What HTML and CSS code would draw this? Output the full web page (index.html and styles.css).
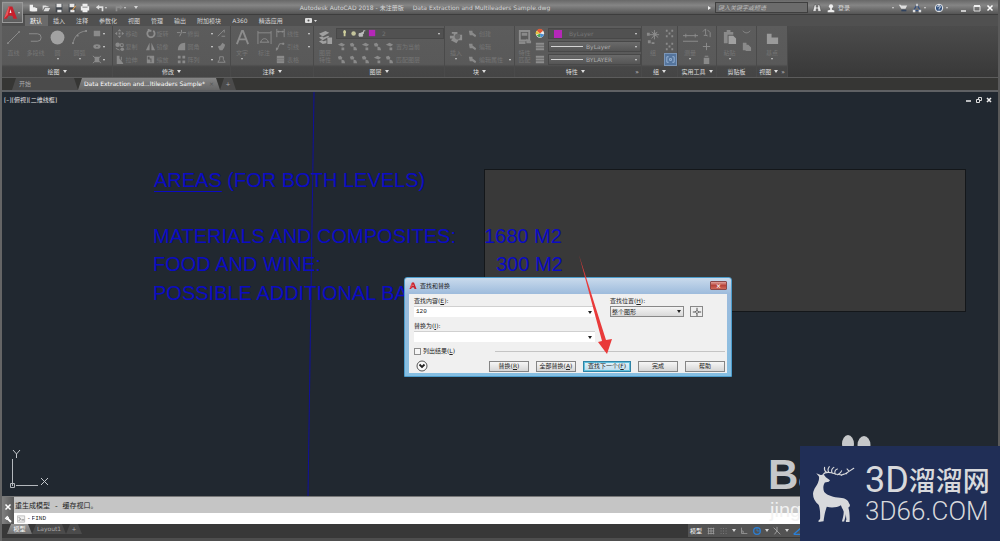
FILE: index.html
```html
<!DOCTYPE html>
<html lang="zh-CN">
<head>
<meta charset="utf-8">
<title>Autodesk AutoCAD 2018</title>
<link rel="stylesheet" href="styles.css">
</head>
<body>
<svg class="defs" aria-hidden="true">
  <symbol id="line" viewBox="0 0 16 16"><path d="M2 14 14 2" class="s"/><circle cx="2" cy="14" r="1"/><circle cx="14" cy="2" r="1"/></symbol>
  <symbol id="pline" viewBox="0 0 16 16"><path d="M1 4h9a4 4 0 0 1 0 8H3" class="s"/></symbol>
  <symbol id="circle" viewBox="0 0 16 16"><circle cx="8" cy="8" r="7.400" fill="#a2a2a2"/></symbol>
  <symbol id="arc" viewBox="0 0 16 16"><path d="M1 15C2 7 7 2 15 1" class="s"/><path d="M0 13h2v2H0zM5 5h2v2H5zM14 0h2v2h-2z"/></symbol>
  <symbol id="rect" viewBox="0 0 12 12"><path d="M3 3h7v6H3z"/></symbol>
  <symbol id="ellipse" viewBox="0 0 12 12"><ellipse cx="6.500" cy="6" rx="4" ry="2.500"/><circle cx="6.500" cy="6" r=".8" fill="#555"/></symbol>
  <symbol id="hatch" viewBox="0 0 12 12"><path d="M2 2l9 8M2 10l9-8" class="s"/><path d="M4 3h5v6H4z"/></symbol>
  <symbol id="move" viewBox="0 0 12 12"><path d="M6 1l2 2.500H4zM6 11l2-2.500H4zM1 6l2.500-2v4zM11 6L8.500 4v4zM5 5h2v2H5z"/></symbol>
  <symbol id="copy" viewBox="0 0 12 12"><circle cx="4" cy="4" r="2.500"/><circle cx="9" cy="9" r="2"/><path d="M7 3h3v3H7zM2 8l4 2" class="s"/></symbol>
  <symbol id="stretch" viewBox="0 0 12 12"><path d="M3 2h3v3l4 5v1H3z"/><path d="M8 3v4" class="s"/></symbol>
  <symbol id="rotate" viewBox="0 0 12 12"><path d="M4 3a4 4 0 1 0 5 0M4 1v2h3" class="s w"/></symbol>
  <symbol id="mirror" viewBox="0 0 12 12"><path d="M5 2v8H1zM7 2v8h4z"/></symbol>
  <symbol id="scale" viewBox="0 0 12 12"><path d="M2 2h8v8H2zm1 1v3h3v3h1V5H5V3z" fill-rule="evenodd"/></symbol>
  <symbol id="trim" viewBox="0 0 12 12"><path d="M1 5h4M7 5h4M6 2v3l-2 4" class="s"/></symbol>
  <symbol id="fillet" viewBox="0 0 12 12"><path d="M2 10c0-5 3-8 8-8v8z"/></symbol>
  <symbol id="array" viewBox="0 0 12 12"><path d="M2 2h3v3H2zM7 2h3v3H7zM2 7h3v3H2zM7 7h3v3H7z"/></symbol>
  <symbol id="erase" viewBox="0 0 12 12"><path d="M2 9 9 2M6 9h4M9 2v3" class="s"/></symbol>
  <symbol id="explode" viewBox="0 0 12 12"><path d="M2 6l3-1 2-3 3 2-1 3-2 3-3 0z"/></symbol>
  <symbol id="offset" viewBox="0 0 12 12"><path d="M4 3h4v3l2 3H2l2-3z" class="s"/></symbol>
  <symbol id="text" viewBox="0 0 16 16"><path d="M2 15 7.500 1h1L14 15M4 10h8" class="s w"/></symbol>
  <symbol id="dim" viewBox="0 0 16 16"><path d="M1 15V1M15 15V1M1 3h14M4 13c1-5 7-5 8 0M3 13h10" class="s"/></symbol>
  <symbol id="linear" viewBox="0 0 12 12"><path d="M2 1v9M10 1v9M2 4h8M4 3v2M8 3v2" class="s"/></symbol>
  <symbol id="leader" viewBox="0 0 12 12"><path d="M2 10l3-7h5" class="s"/><path d="M1 7l3 1-3 3zM8 2h2v2H8z"/></symbol>
  <symbol id="table" viewBox="0 0 12 12"><path d="M2 2h8v8H2z"/><path d="M2 5h8M2 7.500h8" stroke="#777"/></symbol>
  <symbol id="layers" viewBox="0 0 16 16"><path d="M1 4l7-3 4 2-7 4zM1 8l3-1 2 1 5-2 1 1-7 4zM1 12l3-1 2 1 3-1v3l-4 1zM10 8h5v7h-5z" fill="#a0a0a0"/></symbol>
  <symbol id="lay" viewBox="0 0 12 12"><path d="M2 4l4-2 4 2-3 2zM6 7h3v3H6z"/></symbol>
  <symbol id="lay2" viewBox="0 0 12 12"><path d="M2 3l3-1 2 2-1 2H3zM6 6l3 1 1 3H6z"/></symbol>
  <symbol id="insert" viewBox="0 0 16 16"><path d="M3 2h6v3l5 0v6h-4l-2 3-6-3 2-2H1V6h4V4H3z" fill="#8f8f8f"/><circle cx="9" cy="7" r="3" fill="#6a6a6a"/></symbol>
  <symbol id="blk" viewBox="0 0 12 12"><path d="M2 3h4v2l4 3-1 2-3-2H3z"/></symbol>
  <symbol id="match" viewBox="0 0 16 16"><path d="M3 1h10v10H3z" class="s w"/><path d="M5 3h6v3H5zM2 12h7v3H2zM10 9l3 3 2-1v3h-5z"/></symbol>
  <symbol id="lines" viewBox="0 0 12 12"><path d="M2 3h9M2 6h9M2 9h9" class="s w"/></symbol>
  <symbol id="wheel" viewBox="0 0 12 12"><circle cx="6.500" cy="6" r="4.500" fill="#eee"/><path d="M6.500 6 3 3a4 4 0 0 1 7 0z" fill="#e35b35"/><path d="M6.500 6 3 3a4 4 0 0 0-1 4z" fill="#e6c23c"/><path d="M6.500 6 11 7a4 4 0 0 1-4 3z" fill="#4a8dd0"/><path d="M6.500 6 7 10a4 4 0 0 1-4-2z" fill="#4ca356"/></symbol>
  <symbol id="group" viewBox="0 0 16 16"><path d="M9 0v10M4 5h10M6 2l7 6M12 2 6 9" class="s"/><path d="M8 3h3v3H8zM1 3h3v3H1zM2 11h3v3H2zM6 13h3v2H6z"/></symbol>
  <symbol id="dots" viewBox="0 0 12 12"><path d="M2 2h2v2H2zM8 2h2v2H8zM2 8h2v2H2zM8 8h2v2H8zM5 5h2v2H5z"/></symbol>
  <symbol id="brackets" viewBox="0 0 12 12"><path d="M4 3H2v6h2M8 3h2v6H8M5 5h2v2H5z" fill="none" stroke="#9db8d8"/></symbol>
  <symbol id="measure" viewBox="0 0 16 16"><path d="M0 6h16M0 12h16M3 4v4M13 4v4" class="s"/></symbol>
  <symbol id="calc" viewBox="0 0 12 12"><path d="M3 4h6v7H3zM4 2h4v1H4z"/></symbol>
  <symbol id="plus" viewBox="0 0 12 12"><path d="M6 2v8M2 6h8" class="s"/></symbol>
  <symbol id="select" viewBox="0 0 12 12"><path d="M2 4l3-3v6l2 2M7 2l3 3v5M3 8h4" class="s"/></symbol>
  <symbol id="paste" viewBox="0 0 16 16"><path d="M2 2h3V0h4v2h3v3H6v9H2z"/><path d="M7 6h5l3 3v6H7z" fill="#a0a0a0"/></symbol>
  <symbol id="cut" viewBox="0 0 12 12"><path d="M2 3c2 3 6 3 8 0" class="s"/></symbol>
  <symbol id="pages" viewBox="0 0 12 12"><path d="M2 2h4v8H2zM6 4h2l3 3v4H5z"/></symbol>
  <symbol id="folder" viewBox="0 0 16 16"><path d="M2 4h5v4h7v7H2z" fill="#9a9a9a"/></symbol>
  <symbol id="new" viewBox="0 0 12 12"><path d="M2 2h4v3h3v5H2z" fill="#eee"/><path d="M4 6h7v4H4z" fill="#eee"/></symbol>
  <symbol id="open" viewBox="0 0 12 12"><path d="M2 3h4l1 1h2v1H4L2 9zM5 6h6L9 10H3z" fill="#ddd"/></symbol>
  <symbol id="save" viewBox="0 0 12 12"><path d="M2 1h8v10H2z" fill="#41464d"/><path d="M3 1h6v4H3zM4 8h5v3H4z" fill="#e8e8e8"/></symbol>
  <symbol id="saveas" viewBox="0 0 12 12"><path d="M2 1h8v10H2z" fill="#41464d"/><path d="M3 1h6v4H3zM4 8h5v3H4z" fill="#e8e8e8"/><path d="M6 8l4-5 1 1-4 5z" fill="#d79b54"/></symbol>
  <symbol id="print" viewBox="0 0 12 12"><path d="M3 1h6v3h2v5H9v2H3V9H1V4h2z" fill="#eee"/><path d="M3 5h6" stroke="#777"/></symbol>
  <symbol id="undo" viewBox="0 0 12 12"><path d="M1 5l4-3v2h5v6H8V6H5v2z" fill="#ddd"/></symbol>
  <symbol id="redo" viewBox="0 0 12 12"><path d="M11 5L7 2v2H2v6h2V6h3v2z" fill="#8d8d8d"/></symbol>
  <symbol id="bino" viewBox="0 0 12 12"><path d="M3 2h2v3h2V2h2l2 8H7V7H5v3H1z" fill="#e6e6e6" stroke="#444" stroke-width=".6"/></symbol>
  <symbol id="user" viewBox="0 0 12 12"><circle cx="6" cy="4" r="2.500" fill="#eee"/><path d="M2 11V9l3-1V6h2v2l3 1v2z" fill="#eee"/></symbol>
  <symbol id="cart" viewBox="0 0 12 12"><path d="M1 2h2l1 1h7L9 7H4z" fill="#ddd"/><path d="M4 9h6" stroke="#30425e" stroke-width="2"/></symbol>
  <symbol id="a360" viewBox="0 0 12 12"><path d="M6 2 2 9h8z" fill="none" stroke="#35507d" stroke-width="1.500"/><path d="M5 1h2v3H5zM1 8h3v3H1zM8 8h3v3H8z" fill="#ddd"/></symbol>
  <symbol id="help" viewBox="0 0 12 12"><circle cx="6" cy="6" r="4.500" fill="#33527f" stroke="#eee" stroke-width="1.200"/><path d="M4.500 5c0-2.500 3-2 3-.5S6 6 6 7.200M6 8v1" fill="none" stroke="#fff" stroke-width="1.200"/></symbol>
  <symbol id="logo" viewBox="0 0 16 16"><path d="M1 14 6 1h4l5 13h-4l-1-3H6l-2 3z" fill="#c8202c"/><path d="M7 8h2L8 4z" fill="#f3e9e9"/><path d="M1 14 6 1h1L5 10z" fill="#e9575b"/></symbol>
</svg>

<div class="app">
  <header class="titlebar">
    <button class="appmenu" aria-label="应用程序菜单"><svg><use href="#logo"/></svg><i class="caret"></i></button>
    <nav class="quick" aria-label="快速访问">
      <button aria-label="新建"><svg><use href="#new"/></svg></button>
      <button aria-label="打开"><svg><use href="#open"/></svg></button>
      <button aria-label="保存"><svg><use href="#save"/></svg></button>
      <button aria-label="另存为"><svg><use href="#saveas"/></svg></button>
      <button aria-label="打印"><svg><use href="#print"/></svg></button>
      <button class="wide" aria-label="放弃"><svg><use href="#undo"/></svg><i class="caret"></i></button>
      <button class="wide" aria-label="重做"><svg><use href="#redo"/></svg><i class="caret"></i></button>
      <button aria-label="自定义"><i class="caret wedge"></i></button>
    </nav>
    <h1 class="wintitle"><span>Autodesk AutoCAD 2018 - 未注册版</span><span>Data Extraction and Multileaders Sample.dwg</span></h1>
    <div class="info">
      <i class="caret side"></i>
      <input class="search" type="text" aria-label="搜索" placeholder="键入关键字或短语">
      <button aria-label="查找"><svg><use href="#bino"/></svg></button>
      <button class="login"><svg><use href="#user"/></svg>登录</button>
      <i class="caret"></i>
      <button aria-label="应用商店"><svg><use href="#cart"/></svg></button>
      <button aria-label="A360"><svg><use href="#a360"/></svg><i class="caret"></i></button>
      <button class="helpbtn" aria-label="帮助"><svg><use href="#help"/></svg><i class="caret"></i></button>
    </div>
    <div class="winbtns">
      <button aria-label="最小化"><svg viewBox="0 0 8 8"><path d="M1 7h5" stroke="#eee" stroke-width="1.500"/></svg></button>
      <button aria-label="还原"><svg viewBox="0 0 8 8"><path d="M1 2h6v5H1z" fill="none" stroke="#ddd"/><path d="M1 2h6" stroke="#eee" stroke-width="2"/></svg></button>
      <button aria-label="关闭"><svg viewBox="0 0 8 8"><path d="M1.500 1.500l5 5M6.500 1.500l-5 5" stroke="#fff" stroke-width="1.500"/></svg></button>
    </div>
  </header>

  <nav class="tabs" aria-label="功能区">
    <button class="on">默认</button><button>插入</button><button>注释</button><button>参数化</button><button>视图</button><button>管理</button><button>输出</button><button>附加模块</button><button>A360</button><button>精选应用</button><button class="cam" aria-label="最小化功能区"><svg viewBox="0 0 12 8"><rect x="0" y="1" width="7" height="5" rx="1" fill="#ddd"/><circle cx="3.500" cy="3.500" r="1" fill="#555"/><path d="M9 3h3l-1.500 2z" fill="#ddd"/></svg></button>
  </nav>

  <div class="ribbon">
    <section class="panel draw">
      <div class="tools">
        <button class="big"><svg><use href="#line"/></svg>直线</button>
        <button class="big"><svg><use href="#pline"/></svg>多段线</button>
        <button class="big"><svg><use href="#circle"/></svg>圆<i class="caret"></i></button>
        <button class="big"><svg><use href="#arc"/></svg>圆弧<i class="caret"></i></button>
        <div class="col c22">
          <button aria-label="矩形"><svg><use href="#rect"/></svg><i class="caret"></i></button>
          <button aria-label="椭圆"><svg><use href="#ellipse"/></svg><i class="caret"></i></button>
          <button aria-label="图案填充"><svg><use href="#hatch"/></svg><i class="caret"></i></button>
        </div>
      </div>
      <h2>绘图<i class="caret wedge"></i></h2>
    </section>
    <section class="panel modify">
      <div class="tools">
        <div class="col c31"><button><svg><use href="#move"/></svg>移动</button><button><svg><use href="#copy"/></svg>复制</button><button><svg><use href="#stretch"/></svg>拉伸</button></div>
        <div class="col c31"><button><svg><use href="#rotate"/></svg>旋转</button><button><svg><use href="#mirror"/></svg>镜像</button><button><svg><use href="#scale"/></svg>缩放</button></div>
        <div class="col c40"><button><svg><use href="#trim"/></svg>修剪<i class="caret end"></i></button><button><svg><use href="#fillet"/></svg>圆角<i class="caret end"></i></button><button><svg><use href="#array"/></svg>阵列<i class="caret end"></i></button></div>
        <div class="col c14"><button aria-label="删除"><svg><use href="#erase"/></svg></button><button aria-label="分解"><svg><use href="#explode"/></svg></button><button aria-label="偏移"><svg><use href="#offset"/></svg></button></div>
      </div>
      <h2>修改<i class="caret wedge"></i></h2>
    </section>
    <section class="panel annotate">
      <div class="tools">
        <button class="big bright"><svg><use href="#text"/></svg>文字<i class="caret"></i></button>
        <button class="big"><svg><use href="#dim"/></svg>标注</button>
        <div class="col c36"><button><svg><use href="#linear"/></svg>线性<i class="caret end"></i></button><button><svg><use href="#leader"/></svg>引线<i class="caret end"></i></button><button><svg><use href="#table"/></svg>表格</button></div>
      </div>
      <h2>注释<i class="caret wedge"></i></h2>
    </section>
    <section class="panel layer">
      <div class="tools">
        <button class="big"><svg><use href="#layers"/></svg>图层<br>特性</button>
        <div class="col c108">
          <button class="combo-dark"><svg viewBox="0 0 44 10" class="laystate"><path d="M6 1a2.500 2.500 0 0 0-1 4v3h2V5a2.500 2.500 0 0 0-1-4z" fill="#cfcf9d"/><circle cx="16" cy="5" r="2.500" fill="#c4c49c"/><path d="M22 5h5V2h2M22 5h4v3h-4z" fill="#bbb" stroke="#bbb"/><path d="M33 1h7v7h-7z" fill="#b527b8"/></svg>2<i class="caret end"></i></button>
          <div class="row"><button aria-label="关"><svg><use href="#lay"/></svg></button><button aria-label="隔离"><svg><use href="#lay2"/></svg></button><button aria-label="冻结"><svg><use href="#lay"/></svg></button><button aria-label="锁定"><svg><use href="#lay2"/></svg></button><button><svg><use href="#lay"/></svg>置为当前</button></div>
          <div class="row"><button aria-label="打开所有"><svg><use href="#lay2"/></svg></button><button aria-label="取消隔离"><svg><use href="#lay2"/></svg></button><button aria-label="解冻"><svg><use href="#lay2"/></svg></button><button aria-label="解锁"><svg><use href="#lay"/></svg></button><button><svg><use href="#lay2"/></svg>匹配图层</button></div>
        </div>
      </div>
      <h2>图层<i class="caret wedge"></i></h2>
    </section>
    <section class="panel block">
      <div class="tools">
        <button class="big"><svg><use href="#insert"/></svg>插入<i class="caret"></i></button>
        <div class="col c46"><button><svg><use href="#blk"/></svg>创建</button><button><svg><use href="#blk"/></svg>编辑</button><button><svg><use href="#blk"/></svg>编辑属性<i class="caret end"></i></button></div>
      </div>
      <h2>块<i class="caret wedge"></i></h2>
    </section>
    <section class="panel props">
      <div class="tools">
        <button class="big slim"><svg><use href="#match"/></svg>特性<br>匹配</button>
        <div class="col c14"><button aria-label="颜色"><svg><use href="#wheel"/></svg></button><button aria-label="线宽"><svg><use href="#lines"/></svg></button><button aria-label="线型"><svg><use href="#lines"/></svg></button></div>
        <div class="col c94">
          <button class="combo-dark"><i class="swatch"></i>ByLayer<i class="caret end"></i></button>
          <button class="combo-dark lit"><i class="rule"></i>ByLayer<i class="caret end"></i></button>
          <button class="combo-dark lit"><i class="rule"></i>BYLAYER<i class="caret end"></i></button>
        </div>
      </div>
      <h2 class="ends"><span></span><span>特性<i class="caret wedge"></i></span><i class="launch">»</i></h2>
    </section>
    <section class="panel groups">
      <div class="tools">
        <button class="big"><svg><use href="#group"/></svg>组</button>
        <div class="col c14"><button aria-label="解除编组"><svg><use href="#dots"/></svg></button><button aria-label="组编辑"><svg><use href="#dots"/></svg></button><button class="active" aria-label="组选择"><svg><use href="#brackets"/></svg></button></div>
      </div>
      <h2>组<i class="caret wedge"></i></h2>
    </section>
    <section class="panel utils">
      <div class="tools">
        <button class="big"><svg><use href="#measure"/></svg>测量<i class="caret"></i></button>
        <div class="col c14"><button aria-label="快速选择"><svg><use href="#select"/></svg></button><button aria-label="点坐标"><svg><use href="#plus"/></svg></button><button aria-label="计算器"><svg><use href="#calc"/></svg></button></div>
      </div>
      <h2>实用工具<i class="caret wedge"></i></h2>
    </section>
    <section class="panel clip">
      <div class="tools">
        <button class="big"><svg><use href="#paste"/></svg>粘贴<i class="caret"></i></button>
        <div class="col c14"><button aria-label="剪切"><svg><use href="#cut"/></svg></button><button aria-label="复制剪裁"><svg><use href="#pages"/></svg></button></div>
      </div>
      <h2>剪贴板</h2>
    </section>
    <section class="panel view">
      <div class="tools"><button class="big"><svg><use href="#folder"/></svg>基点<i class="caret"></i></button></div>
      <h2>视图<i class="caret wedge"></i><i class="launch">»</i></h2>
    </section>
  </div>

  <nav class="docs" aria-label="图形文件">
    <button class="doc start">开始</button>
    <button class="doc current">Data Extraction and...ltileaders Sample*<span class="x">×</span></button>
    <button class="doc add" aria-label="新图形">+</button>
  </nav>

  <main class="canvas">
    <div class="viewlabel">[–][俯视][二维线框]</div>
    <div class="viewbtns">
      <button aria-label="最小化"><svg viewBox="0 0 8 8"><path d="M1 5h5" stroke="#eee" stroke-width="1.500"/></svg></button>
      <button aria-label="还原"><svg viewBox="0 0 8 8"><path d="M1.500 3.500h3v3h-3zM3.500 3V1.500h3v3H5" fill="none" stroke="#ddd"/></svg></button>
      <button aria-label="关闭"><svg viewBox="0 0 8 8"><path d="M2 2l4 4M6 2l-4 4" stroke="#eee" stroke-width="1.500"/></svg></button>
    </div>
    <div class="solid"></div>
    <svg class="axis" viewBox="0 0 8 404" preserveAspectRatio="none"><path d="M7 0 1 404" stroke="#10109a"/></svg>
    <p class="mtext t1"><u>AREAS</u> (FOR BOTH LEVELS)</p>
    <p class="mtext t2">MATERIALS AND COMPOSITES:</p>
    <p class="mtext t3">FOOD AND WINE:</p>
    <p class="mtext t4">POSSIBLE ADDITIONAL BA</p>
    <p class="mtext v2">1680 M2</p>
    <p class="mtext v3">300 M2</p>
    <svg class="ucs" viewBox="0 0 44 44" aria-label="UCS"><path d="M4.500 12v27M8 38.500h22M2.500 36.500h4v4h-4z" fill="none" stroke="#b4b8bd"/><path d="M5 3l3.500 4L12 3M8.500 7v4M33 31l7 7M40 31l-7 7" fill="none" stroke="#c4c8cc"/></svg>

    <form class="dialog" aria-label="查找和替换">
      <header class="dtitle"><svg><use href="#logo"/></svg><span>查找和替换</span><button type="button" class="dclose" aria-label="关闭">×</button></header>
      <div class="dbody">
        <div class="fields">
          <div class="field find">
            <label for="find">查找内容(<u>E</u>):</label>
            <div class="combo"><input id="find" type="text" value="120"><button type="button" aria-label="历史"><i class="caret wedge"></i></button></div>
          </div>
          <div class="field">
            <label for="where">查找位置(<u>H</u>):</label>
            <div class="where"><div class="selwrap"><select id="where"><option>整个图形</option></select><i class="caret wedge"></i></div><button type="button" class="pick" aria-label="选择对象"><svg viewBox="0 0 12 12"><path d="M6 1v3M6 8v3M1 6h3M8 6h3" stroke="#333"/><path d="M6 4l2 2-2 2-2-2z" fill="none" stroke="#333"/></svg></button></div>
          </div>
        </div>
        <div class="fields">
          <div class="field find">
            <label for="repl">替换为(<u>I</u>):</label>
            <div class="combo"><input id="repl" type="text"><button type="button" aria-label="历史"><i class="caret wedge"></i></button></div>
          </div>
        </div>
        <div class="listrow"><label><input type="checkbox">列出结果(<u>L</u>)</label><hr></div>
        <div class="actions">
          <button type="button" class="more" aria-label="展开"><svg viewBox="0 0 12 12"><circle cx="6" cy="6" r="5" fill="#fafafa" stroke="#555"/><path d="M3.500 4.500 6 7l2.500-2.500" fill="none" stroke="#222" stroke-width="1.800"/></svg></button>
          <button type="button" class="cmd">替换(<u>R</u>)</button>
          <button type="button" class="cmd">全部替换(<u>A</u>)</button>
          <button type="button" class="cmd focus">查找下一个(<u>F</u>)</button>
          <button type="button" class="cmd">完成</button>
          <button type="button" class="cmd">帮助</button>
        </div>
      </div>
    </form>
    <svg class="arrow" viewBox="0 0 40 104" aria-hidden="true"><path d="M4 3 31 88l6-1-5 15-9-12 4-1z" fill="#e93a3a"/></svg>
  </main>

  <div class="command">
    <div class="grip"><button aria-label="关闭命令行"><svg viewBox="0 0 8 8"><path d="M1.500 1.500l5 5M6.500 1.500l-5 5" stroke="#fff" stroke-width="1.500"/></svg></button><button aria-label="自定义命令行"><svg viewBox="0 0 8 8"><path d="M2 2l5 5" stroke="#fff" stroke-width="2"/><path d="M1 3a2 2 0 0 0 3 1M3 1a2 2 0 0 1 1 3" fill="none" stroke="#fff"/></svg></button></div>
    <div class="lines">
      <output class="history">重生成模型 - 缓存视口。</output>
      <label class="prompt"><svg viewBox="0 0 10 8"><path d="M.5.500h8v7h-8z" fill="#eee" stroke="#bbb"/><path d="M2 2l2 2-2 2M5 5h3" fill="none" stroke="#777"/></svg>-<input type="text" value="FIND" aria-label="命令"></label>
    </div>
  </div>

  <footer class="status">
    <nav class="layouts" aria-label="布局"><button class="doc current">模型</button><button class="doc">Layout1</button><button class="doc add" aria-label="新建布局">+</button></nav>
    <div class="toggles">
      <button class="model">模型</button>
      <button aria-label="栅格"><svg viewBox="0 0 12 12"><path d="M2 3h8M2 6h8M2 9h8M3 2v8M6 2v8M9 2v8" stroke="#999"/></svg></button>
      <button aria-label="捕捉"><svg viewBox="0 0 12 12"><path d="M2 3h8M2 6h8M2 9h8" stroke="#888" stroke-dasharray="1 2"/></svg></button>
      <i class="caret wedge"></i>
      <button aria-label="正交"><svg viewBox="0 0 12 12"><path d="M3 2v7h7M3 6h2v3" fill="none" stroke="#999"/></svg></button>
      <button aria-label="极轴"><svg viewBox="0 0 12 12"><circle cx="6" cy="6" r="4" fill="none" stroke="#2a7fd6" stroke-width="1.500"/><path d="M6 6V2M6 6h4" stroke="#2a7fd6"/></svg></button>
      <i class="caret wedge"></i>
      <button aria-label="等轴测"><svg viewBox="0 0 12 12"><path d="M2 2l8 8M6 1v5L3 10" fill="none" stroke="#aaa"/></svg></button>
      <i class="caret wedge"></i>
      <button aria-label="对象捕捉"><svg viewBox="0 0 12 12"><path d="M2 10h10M2 10l8-7" fill="none" stroke="#2a7fd6" stroke-width="1.500"/></svg></button>
    </div>
  </footer>

  <div class="baidu" aria-hidden="true">
    <svg viewBox="0 0 34 20"><ellipse cx="8" cy="10" rx="6" ry="9"/><ellipse cx="24" cy="11" rx="6.500" ry="9"/></svg>
    <span class="bd">Bai</span><span class="jy">jing</span>
  </div>
  <aside class="brand">
    <svg class="deer" viewBox="0 0 134 176" aria-hidden="true">
      <path d="M10 23 24 29 34 28 40 36 53 45 49 50 37 52C31 60 31 73 35 82 45 94 65 98 84 100 100 101 110 107 112 117 118 122 114 128 110 130 114 143 115 158 114 175L103 175 102 171 104 168 102 148C95 140 90 133 87 123 76 130 58 132 43 128 39 139 36 150 33 173L17 175 18 169 22 167C23 149 22 134 18 122 6 112 0 101 0 87 2 70 13 61 16 51 19 43 20 37 18 33z" fill="#d8d9dc"/>
      <path d="M90 126c8 12 7 24 0 48h7c4-14 8-26 5-36z" fill="#d8d9dc"/>
      <path d="M31 28C37 18 47 20 58 22 78 30 98 30 110 19L127 8M42 20C35 16 35 10 36 5M50 21C45 15 47 8 51 3M60 23C56 15 60 8 65 5M69 26C66 18 70 12 76 10M76 28C82 24 86 24 89 16M88 30C93 25 96 24 105 25M112 17l-6-7" fill="none" stroke="#d8d9dc" stroke-width="3.500" stroke-linecap="round"/>
    </svg>
    <div class="brandtext"><strong><span>3D</span>溜溜网</strong><em>3D66.COM</em></div>
  </aside>
</div>
</body>
</html>
```

FILE: styles.css
```css
* { box-sizing: border-box; }
body {
  margin: 0;
  background: #3a3a3a;
  font: 6px/8px "DejaVu Sans", "Noto Sans CJK SC", sans-serif;
  color: #d4d4d4;
}
button, input, select {
  font: inherit;
  color: inherit;
  background: none;
  border: 0;
  padding: 0;
  margin: 0;
  border-radius: 0;
}
button { display: flex; align-items: center; white-space: nowrap; }
h1, h2, p { margin: 0; font-weight: 400; font-size: inherit; }
svg { display: block; flex: none; }
.defs { position: absolute; width: 0; height: 0; }
.s { fill: none; stroke: #8d8d8d; stroke-width: 1; }
.w { stroke-width: 2; }

.caret {
  flex: none;
  width: 0;
  height: 0;
  border: 1px solid transparent;
  border-top: 2px solid currentColor;
  border-bottom: 0;
}
.caret.wedge { border-width: 3px 2px 0; }
.caret.side { border: 2px solid transparent; border-left: 3px solid #eee; border-right: 0; }
.caret.end { margin-left: auto; margin-right: 3px; color: #ddd; }

.app {
  position: relative;
  display: flex;
  flex-direction: column;
  min-height: 100vh;
  border-left: 2px solid #656565;
  border-right: 2px solid #5a5a5a;
}

/* title bar */
.titlebar {
  position: relative;
  display: flex;
  align-items: center;
  height: 15px;
  padding: 0 4px 0 24px;
  background: linear-gradient(#686868, #858585 35%, #575757 90%, #303030);
}
.appmenu {
  position: absolute;
  left: 0;
  top: 2px;
  width: 21px;
  height: 21px;
  background: linear-gradient(#888, #5c5c5c);
  border: 1px solid #999;
  z-index: 2;
}
.appmenu svg { width: 15px; height: 16px; }
.quick { display: flex; align-items: center; }
.quick button { width: 13px; justify-content: center; }
.quick .wide { width: 19px; }
.quick svg, .info svg { width: 10px; height: 10px; }
.wintitle {
  flex: 1;
  display: flex;
  justify-content: center;
  gap: 9px;
  white-space: nowrap;
}
.info { display: flex; align-items: center; gap: 4px; }
.search {
  width: 93px;
  height: 11px;
  padding: 0 2px;
  background: #6c6c6c;
  border: 1px solid #3f3f3f;
}
.search::placeholder { color: #bdbdbd; font-style: italic; opacity: 1; }
.login { gap: 2px; width: 62px; }
.info button .caret { margin-left: 2px; }
.helpbtn { margin-left: 4px; }
.winbtns { display: flex; gap: 5px; margin-left: 12px; }
.winbtns svg, .viewbtns svg { width: 8px; height: 8px; }

/* ribbon */
.tabs {
  display: flex;
  height: 11px;
  padding-left: 23px;
  background: #505050;
}
.tabs button { padding: 0 6px 0 5px; }
.tabs .on { background: #6a6a6a; color: #fff; }
.tabs .cam { padding-left: 16px; }
.cam svg { width: 12px; height: 8px; }
.ribbon {
  display: flex;
  background: linear-gradient(#4c4c4c, #383838);
  border-bottom: 1px solid #5c5c5c;
}
.panel {
  flex: none;
  display: flex;
  flex-direction: column;
  background: linear-gradient(#5c5c5c, #595959 75%, #474747 80%, #454545);
  border-right: 1px solid #4a4a4a;
  color: #757575;
  fill: #8a8a8a;
}
.draw { width: 111px; }
.modify { width: 118px; }
.annotate { width: 83px; }
.layer { width: 131px; }
.block { width: 70px; }
.props { width: 127px; }
.groups { width: 36px; }
.utils { width: 39px; }
.clip { width: 40px; }
.view { width: 31px; }
.tools { display: flex; justify-content: center; height: 40px; padding-top: 1px; }
.big {
  flex: none;
  flex-direction: column;
  width: 22px;
  padding-top: 2px;
  line-height: 7px;
}
.big svg { width: 15px; height: 17px; margin-bottom: 3px; }
.big.slim { width: 19px; }
.big .caret { margin-top: 2px; color: #ccc; }
.bright .s { stroke: #bbb; }
.col { display: flex; flex-direction: column; }
.col button { height: 13px; gap: 1px; }
.col svg { width: 11px; height: 11px; }
.col .caret { color: #ddd; }
.c14 { width: 14px; }
.c22 { width: 21px; }
.c31 { width: 31px; }
.c36 { width: 38px; }
.c40 { width: 40px; }
.c46 { width: 47px; }
.c94 { width: 93px; }
.c108 { width: 108px; }
.row { display: flex; gap: 1px; }
.col .combo-dark {
  height: 11px;
  margin: 1px 0;
  padding-left: 2px;
  gap: 3px;
  background: #515151;
  border: 1px solid #484848;
}
.col .combo-dark.lit { background: linear-gradient(#6a6a6a, #555); color: #aaa; }
.col .laystate { width: 40px; height: 9px; }
.swatch { width: 8px; height: 8px; margin: 0 4px 0 3px; background: #b527b8; }
.rule { width: 32px; height: 1px; background: #d5d5d5; }
.active { width: 13px; background: #55759d; border: 1px solid #7b96b8; }
.panel h2, .panel h2 span {
  display: flex;
  align-items: center;
  justify-content: center;
  gap: 3px;
  height: 11px;
  color: #dedede;
  white-space: nowrap;
}
.panel h2.ends { justify-content: space-between; padding-right: 2px; }
.launch { font-style: normal; }

/* drawing tabs */
.docs { display: flex; height: 14px; padding-left: 10px; background: #363634; border-bottom: 2px solid #5f6164; }
.doc { height: 12px; justify-content: center; background: #4b4b4b; color: #aaa; clip-path: polygon(4px 0, calc(100% - 4px) 0, 100% 100%, 0 100%); }
.docs .start { width: 66px; padding-right: 40px; }
.docs .current { width: 142px; gap: 4px; background: linear-gradient(#858585, #666); color: #fff; }
.docs .add { width: 16px; }
.x { color: #555; }

/* drawing area */
.canvas {
  position: relative;
  flex: 1;
  min-height: 400px;
  overflow: hidden;
  background: #212830;
}
.viewlabel { padding: 4px 2px; color: #e4e4e4; }
.viewbtns { position: absolute; right: 5px; top: 4px; display: flex; gap: 2px; }
.solid { position: absolute; left: 482px; top: 77px; width: 482px; height: 143px; background: #393939; border: 1px solid #14171a; }
.axis { position: absolute; left: 305px; top: 0; width: 8px; height: 100%; }
.mtext {
  position: absolute;
  font: 20px/28px "Liberation Sans", sans-serif;
  color: #0b0bc4;
  white-space: nowrap;
}
.mtext u { text-decoration-thickness: 1px; text-underline-offset: 4px; }
.t1 { left: 152px; top: 74px; }
.t2 { left: 151px; top: 130px; }
.t3 { left: 151px; top: 158px; }
.t4 { left: 151px; top: 187px; }
.v2 { left: 482px; top: 130px; }
.v3 { left: 494px; top: 158px; }
.ucs { position: absolute; left: 6px; bottom: 5px; width: 44px; height: 44px; }

/* find and replace */
.dialog {
  position: absolute;
  left: 402px;
  top: 185px;
  width: 328px;
  padding: 0 4px 3px;
  background: linear-gradient(#c9daec, #9dbbdc 16px, #86bfe2);
  border: 1px solid #4c9ccb;
  border-radius: 3px 3px 0 0;
  color: #222;
}
.dtitle { display: flex; align-items: center; gap: 3px; height: 16px; }
.dtitle svg { width: 8px; height: 8px; }
.dclose {
  width: 17px;
  height: 9px;
  margin: 0 0 1px auto;
  justify-content: center;
  background: linear-gradient(#e0a09a, #b8443a 50%, #cf6a5a);
  border: 1px solid #8c4a4a;
  border-radius: 1px;
  color: #fff;
  font-weight: 700;
}
.dbody { display: flex; flex-direction: column; gap: 4px; padding: 2px 2px 1px 5px; background: #f0f0f0; }
.fields { display: flex; gap: 15px; }
.field { display: flex; flex-direction: column; }
.field label { line-height: 10px; }
.find { width: 181px; }
.combo { display: flex; height: 11px; background: #fff; border-top: 1px solid #d0d0d0; }
.combo input { flex: 1; min-width: 0; padding-left: 2px; font-family: "Liberation Mono", monospace; }
.combo button { width: 10px; justify-content: center; }
.where { display: flex; gap: 6px; }
.selwrap { position: relative; width: 74px; height: 11px; }
.selwrap select { width: 100%; height: 11px; padding-left: 1px; appearance: none; background: linear-gradient(#f4f4f4, #d9d9d9); border: 1px solid #888; display: block; }
.selwrap .caret { position: absolute; right: 3px; top: 4px; pointer-events: none; }
.pick { width: 13px; height: 11px; justify-content: center; background: #eee; border: 1px solid #888; }
.pick svg { width: 10px; height: 10px; }
.listrow { display: flex; align-items: center; gap: 40px; height: 10px; }
.listrow label { display: flex; align-items: center; white-space: pre; }
.listrow input { appearance: none; width: 7px; height: 7px; margin-right: 2px; background: #f6f6f6; border: 1px solid #8e8e8e; }
.listrow hr { flex: 1; margin: 0; border: 0; border-top: 1px solid #c4c4c4; }
.actions { display: flex; align-items: center; gap: 7px; }
.more { margin: 0 auto 0 2px; }
.more svg { width: 12px; height: 12px; }
.cmd { width: 40px; height: 11px; justify-content: center; background: linear-gradient(#f6f6f6, #d6d6d6); border: 1px solid #858585; }
.cmd.focus { width: 48px; background: linear-gradient(#e4f1f8, #bcdcec); border: 1px solid #2f83a6; box-shadow: inset 0 0 0 1px #63c1dd; }
.arrow { position: absolute; left: 573px; top: 160px; width: 40px; height: 104px; }

/* command line */
.command { display: flex; border-top: 1px solid #777; }
.grip { display: flex; flex-direction: column; justify-content: flex-end; gap: 4px; width: 12px; padding: 0 2px 1px; background: linear-gradient(90deg, #808080, #5a5a5a); }
.grip svg { width: 8px; height: 8px; }
.lines { flex: 1; display: flex; flex-direction: column; color: #222; font: 7px/10px "Liberation Mono", "Noto Sans CJK SC", monospace; }
.history { padding: 4px 1px 2px; background: #c5c5c5; }
.prompt { display: flex; align-items: center; gap: 1px; height: 11px; padding-left: 3px; background: #fff; font-size: 6px; }
.prompt svg { width: 9px; height: 8px; }
.prompt input { flex: 1; }

/* status bar */
.status { display: flex; justify-content: space-between; height: 17px; padding-left: 5px; background: #383838; border-bottom: 3px solid #4e4e4e; }
.layouts { display: flex; }
.layouts .doc { width: 34px; height: 10px; }
.layouts .doc.current { width: 25px; background: linear-gradient(#999, #707070); color: #fff; }
.layouts .doc.add { width: 16px; }
.toggles { display: flex; align-items: center; gap: 3px; width: 310px; height: 13px; padding-left: 2px; background: #535353; }
.toggles svg { width: 10px; height: 10px; }
.model { margin-right: 1px; color: #fff; }

/* overlays */
.baidu { position: absolute; right: 124px; bottom: 17px; width: 106px; height: 90px; fill: #c6c8ca; }
.baidu svg { position: absolute; right: 0; top: 0; width: 34px; height: 20px; }
.bd { position: absolute; left: 0; bottom: 28px; font: 700 42px/42px "Liberation Sans", sans-serif; color: #c6c8ca; }
.jy { position: absolute; left: 2px; bottom: 0; font: 20px/28px "Liberation Sans", sans-serif; color: #f2f2f2; }
.brand {
  position: absolute;
  right: -2px;
  bottom: 0;
  display: flex;
  align-items: center;
  gap: 9px;
  width: 200px;
  height: 95px;
  padding: 0 8px 0 13px;
  background: #202e56;
  color: #d8d9dc;
}
.deer { width: 43px; height: 58px; }
.brandtext { display: flex; flex-direction: column; white-space: nowrap; }
.brandtext strong { display: flex; align-items: center; font: 500 27px/34px "Noto Sans CJK SC", sans-serif; }
.brandtext strong span { font: 36px/34px "Roboto", sans-serif; }
.brandtext em { font: 300 26px/28px "Roboto", sans-serif; }
```
